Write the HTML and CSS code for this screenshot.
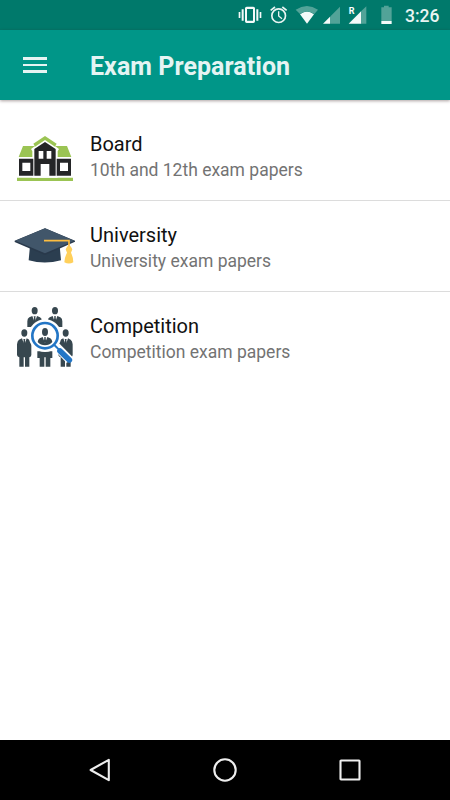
FILE: index.html
```html
<!DOCTYPE html>
<html lang="en">
<head>
<meta charset="utf-8">
<title>Exam Preparation</title>
<link rel="stylesheet" href="styles.css">
</head>
<body>
<div class="screen">
  <div class="status-bar">
    <svg class="status-icons" viewBox="0 0 480 90" aria-hidden="true">
      <g class="fill-light">
        <path fill-rule="evenodd" d="M50 20h20a5 5 0 0 1 5 5v39a5 5 0 0 1-5 5H50a5 5 0 0 1-5-5V25a5 5 0 0 1 5-5zm1 7v35h18V27z"/>
        <path d="M35 28h6v34h-6zM79 28h6v34h-6zM26 36h5v18h-5zM89 36h5v18h-5z"/>
        <path d="M231 71L210 43q21-17 42 0z"/>
        <path d="M300 50v21h-21z"/>
        <path d="M394 33v38h-38z"/>
        <path d="M454 63h31v9h-31z"/>
      </g>
      <g class="fill-dim">
        <path d="M197 29q34-22 67 0l-11 13q-22-15-43 0z"/>
        <path d="M330 20v51h-30V50z"/>
        <path d="M394 33l15-14v52h-15z"/>
        <path d="M454 22h8v-5h14v5h9v41h-31z"/>
      </g>
      <g class="stroke-light">
        <circle cx="146" cy="47" r="20.5" stroke-width="5"/>
        <path d="M146 34v14l10 8" stroke-width="4"/>
        <path d="M122 31l13-10M157 21l13 10" stroke-width="5"/>
      </g>
      <text class="roaming" x="356" y="41">R</text>
    </svg>
    <span class="clock">3:26</span>
  </div>
  <header class="app-bar">
    <div class="menu"><i></i><i></i><i></i></div>
    <h1>Exam Preparation</h1>
  </header>
  <main class="list">
    <section class="row">
      <svg class="icon" viewBox="0 -8 222 222" aria-hidden="true">
        <g class="lime">
          <path d="M45 76h36v33H32zM177 76h-36v33h49z"/>
          <path d="M27 171h168v10H27z"/>
        </g>
        <path class="white" d="M69 85l42-31 42 31-4 7v79H73V92z"/>
        <path class="lime" d="M76 69l35-23 35 23-5 9-30-20-30 20z"/>
        <path class="black" fill-rule="evenodd" d="M79 85l32-21 32 21v80h-19v-35H98v35H79zM92 91v23h14V91zm24 0v23h14V91z"/>
        <path class="black" fill-rule="evenodd" d="M33 114h43v51H33zm10 12v25h24v-25zM146 114h43v51h-43zm10 12v25h24v-25z"/>
      </svg>
      <div class="labels"><h2>Board</h2><p>10th and 12th exam papers</p></div>
    </section>
    <section class="row">
      <svg class="icon" viewBox="0 6 222 222" aria-hidden="true">
        <path class="cap-base" d="M66 116l-4 44q48 13 97 0l-4-44z"/>
        <path class="cap-edge" d="M20 101l91-37 90 37v3l-90 40-91-39z"/>
        <path class="cap-top" d="M22 101l89-37 88 37-88 38z"/>
        <path class="tassel-line" d="M108 101h75v23"/>
        <path class="tassel" d="M178 118h10l5 9-4 10q7 14 7 29-13 7-27 0 1-16 8-29l-4-10z"/>
      </svg>
      <div class="labels"><h2>University</h2><p>University exam papers</p></div>
    </section>
    <section class="row">
      <svg class="icon" viewBox="0 2 222 222" aria-hidden="true">
        <defs>
          <g id="person">
            <ellipse cx="0" cy="-13" rx="9" ry="11"/>
            <path d="M-7 3l-9 4q-5 3-6 14v32q1 6 7 7v28h13V60h4v28h13V60q6-1 6-7V21q-1-11-6-14L7 3 0 24z"/>
            <path d="M-3 5h6l-1 4 2 10-4 6-4-6 2-10z"/>
          </g>
          <g id="bust">
            <ellipse cx="0" cy="-12" rx="9" ry="11"/>
            <path d="M-7 4l-9 4q-6 3-6 12v17h44V20q0-9-6-12L7 4 0 24z"/>
            <path d="M-3 5h6l-1 4 2 10-4 6-4-6 2-10z"/>
          </g>
        </defs>
        <g class="people">
          <use href="#bust" x="80" y="46"/>
          <use href="#bust" x="141" y="46"/>
          <use href="#person" x="49" y="114"/>
          <use href="#person" x="173" y="114"/>
          <path d="M88 156h45v20h-6v26h-14v-28h-4v28H95v-26h-7z"/>
        </g>
        <circle class="white" cx="111" cy="109" r="49"/>
        <g class="people">
          <ellipse cx="111" cy="98" rx="9" ry="12"/>
          <path d="M104 113l-9 4q-5 3-6 11 9 10 22 10t22-10q-1-8-6-11l-9-4-7 19z"/>
          <path d="M108 114h6l-1 4 2 9-4 5-4-5 2-9z"/>
        </g>
        <circle class="lens" cx="111" cy="109" r="38"/>
        <path class="handle-gap" d="M145 141l40 41"/>
        <path class="handle-neck" d="M139 137l14 14"/>
        <path class="handle" d="M156 155l28 27"/>
      </svg>
      <div class="labels"><h2>Competition</h2><p>Competition exam papers</p></div>
    </section>
  </main>
  <nav class="nav-bar">
    <svg viewBox="0 0 24 24" aria-hidden="true"><path d="M20.8 1.8v20.4L2.6 12z"/></svg>
    <svg viewBox="0 0 24 24" aria-hidden="true"><circle cx="12" cy="12" r="10.7"/></svg>
    <svg viewBox="0 0 24 24" aria-hidden="true"><rect x="2.5" y="2.5" width="19" height="19" rx=".5"/></svg>
  </nav>
</div>
</body>
</html>
```

FILE: styles.css
```css
* { box-sizing: border-box; }
body { margin: 0; background: #fff; font-family: Roboto, "Liberation Sans", sans-serif; }
h1, h2, p { margin: 0; font-weight: 400; white-space: nowrap; }
.screen { width: 450px; height: 800px; display: flex; flex-direction: column; overflow: hidden; }

.status-bar { flex: none; height: 30px; display: flex; align-items: center; padding-left: 230px; background: #00796b; }
.status-icons { flex: none; width: 160px; height: 30px; overflow: visible; }
.clock { margin-left: 15px; padding-top: 2px; color: #e9f4f2; font-size: 17.5px; font-weight: 500; line-height: 28px; }
.fill-light { fill: #f4faf9; }
.fill-dim { fill: #52a398; }
.stroke-light { fill: none; stroke: #e9f4f2; }
.roaming { fill: #fff; font-size: 27px; font-weight: 700; }

.app-bar { flex: none; height: 70px; display: flex; align-items: center; padding-left: 23px; background: #009688; box-shadow: 0 1px 3px rgba(50, 20, 20, .4); }
.menu { width: 24px; height: 16px; display: flex; flex-direction: column; justify-content: space-between; }
.menu i { height: 2.6px; background: #e5f4f3; }
.app-bar h1 { margin-left: 43px; padding-top: 4px; color: #e5f4f3; font-size: 25px; font-weight: 700; line-height: 30px; letter-spacing: .05px; }

.list { flex: 1; padding-top: 10px; }
.row { height: 91px; display: flex; align-items: center; padding-left: 8px; border-bottom: 1px solid #dcdcdc; }
.row:last-child { border-bottom-color: transparent; }
.icon { flex: none; width: 74px; height: 74px; }
.labels { margin-left: 8px; padding-top: 3px; }
.labels h2 { color: #111; font-size: 20px; line-height: 26px; }
.labels p { color: #737373; font-size: 17.5px; line-height: 26px; }

.lime { fill: #9bc453; }
.black { fill: #242527; }
.white { fill: #fff; }
.cap-base { fill: #2b3e50; }
.cap-edge { fill: #29394b; }
.cap-top { fill: #41566a; }
.tassel-line { fill: none; stroke: #fdbd40; stroke-width: 5; }
.tassel { fill: #ffd05b; }
.people { fill: #37474f; }
.lens { fill: none; stroke: #2376c6; stroke-width: 8; }
.handle-gap { stroke: #fff; stroke-width: 25; }
.handle-neck { stroke: #2376c6; stroke-width: 6; }
.handle { stroke: #2376c6; stroke-width: 17; stroke-linecap: round; }

.nav-bar { flex: none; height: 60px; display: flex; align-items: center; justify-content: center; gap: 101px; background: #000; }
.nav-bar svg { width: 24px; height: 24px; fill: none; stroke: #eee; stroke-width: 2.1; stroke-linejoin: round; }
```
